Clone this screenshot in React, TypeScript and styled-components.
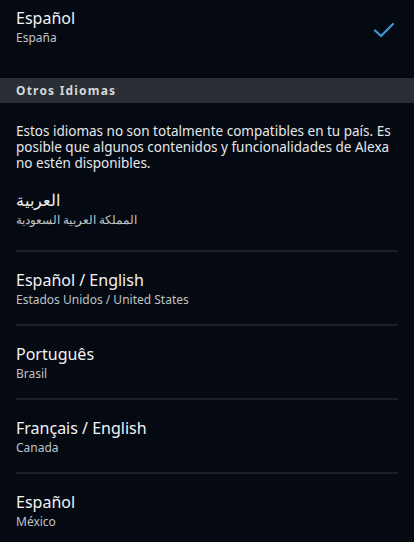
import React from "react";
import styled, { createGlobalStyle } from "styled-components";

const GlobalStyle = createGlobalStyle`
  html, body {
    margin: 0;
    padding: 0;
    background: #050a12;
  }
  body {
    font-family: "Noto Sans", "Open Sans", sans-serif;
    -webkit-font-smoothing: antialiased;
  }
`;

const Page = styled.div`
  width: 414px;
  min-height: 542px;
  background: #050a12;
  color: #ffffff;
  overflow: hidden;
`;

const Current = styled.div`
  display: flex;
  align-items: flex-start;
  justify-content: space-between;
  padding: 7px 18px 0 16px;
  height: 71px;
`;

const Texts = styled.div`
  display: flex;
  flex-direction: column;
`;

const Title = styled.p`
  margin: 0;
  font-size: 16px;
  line-height: 22px;
  color: #f2f3f4;
`;

const Sub = styled.p`
  margin: 0;
  font-size: 12px;
  line-height: 18px;
  color: #bfc3c7;
`;

const Check = styled.svg`
  margin-top: 11px;
  width: 24px;
  height: 24px;
`;

const SectionBar = styled.div`
  height: 25px;
  background: #2a2e35;
  display: flex;
  align-items: center;
  padding-left: 16px;
  font-size: 12px;
  font-weight: bold;
  letter-spacing: 1.2px;
  color: #d5d8db;
`;

const Notice = styled.p`
  margin: 0;
  padding: 20px 16px 0 16px;
  font-size: 13.5px;
  line-height: 16px;
  color: #e6e8ea;
`;

const List = styled.div`
  display: flex;
  flex-direction: column;
  padding: 0 16px;
`;

const Row = styled.div<{ $first?: boolean }>`
  display: flex;
  flex-direction: column;
  padding: ${(p) => (p.$first ? "18px 0 21px" : "17px 0 15px")};
  border-top: ${(p) => (p.$first ? "none" : "2px solid #1a2028")};
`;

const languages = [
  { name: "العربية", region: "المملكة العربية السعودية" },
  { name: "Español / English", region: "Estados Unidos / United States" },
  { name: "Português", region: "Brasil" },
  { name: "Français / English", region: "Canada" },
  { name: "Español", region: "México" },
];

export default function App() {
  return (
    <Page>
      <GlobalStyle />
      <Current>
        <Texts>
          <Title>Español</Title>
          <Sub>España</Sub>
        </Texts>
        <Check viewBox="0 0 24 24" fill="none">
          <path
            d="M3 12.5 L9 18 L21 6"
            stroke="#3d9ad6"
            strokeWidth="2.2"
            strokeLinecap="round"
            strokeLinejoin="round"
          />
        </Check>
      </Current>
      <SectionBar>Otros Idiomas</SectionBar>
      <Notice>
        Estos idiomas no son totalmente compatibles en tu país. Es posible que
        algunos contenidos y funcionalidades de Alexa no estén disponibles.
      </Notice>
      <List>
        {languages.map((l, i) => (
          <Row key={i} $first={i === 0}>
            <Title>{l.name}</Title>
            <Sub>{l.region}</Sub>
          </Row>
        ))}
      </List>
    </Page>
  );
}
